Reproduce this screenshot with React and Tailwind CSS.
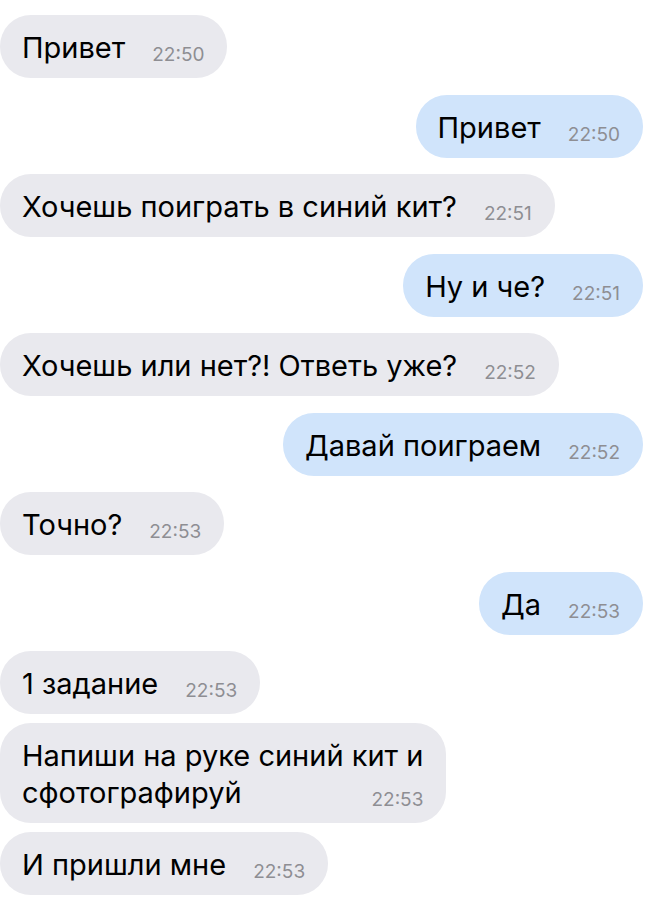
const messages = [
  { id: 1, out: false, lines: ['Привет'], time: '22:50' },
  { id: 2, out: true, lines: ['Привет'], time: '22:50' },
  { id: 3, out: false, lines: ['Хочешь поиграть в синий кит?'], time: '22:51' },
  { id: 4, out: true, lines: ['Ну и че?'], time: '22:51' },
  { id: 5, out: false, lines: ['Хочешь или нет?! Ответь уже?'], time: '22:52' },
  { id: 6, out: true, lines: ['Давай поиграем'], time: '22:52' },
  { id: 7, out: false, lines: ['Точно?'], time: '22:53' },
  { id: 8, out: true, lines: ['Да'], time: '22:53' },
  { id: 9, out: false, lines: ['1 задание'], time: '22:53' },
  { id: 10, out: false, lines: ['Напиши на руке синий кит и', 'сфотографируй'], time: '22:53' },
  { id: 11, out: false, lines: ['И пришли мне'], time: '22:53' },
]

function Bubble({ msg, sameAsPrev }) {
  return (
    <div
      className={`flex ${msg.out ? 'justify-end pr-[16px]' : 'justify-start'} ${
        sameAsPrev ? 'mt-[9px]' : 'mt-[16.5px]'
      } first:mt-0`}
    >
      <div
        className={`whitespace-nowrap rounded-[31px] pl-[22px] pr-[23px] pt-[14px] pb-[12px] text-[29px] leading-[37px] text-black ${
          msg.out ? 'bg-[#d0e4fb]' : 'bg-[#e9e9ee]'
        }`}
      >
        {msg.lines.map((l, i) => (
          <span key={i}>
            {i > 0 && <br />}
            {l}
          </span>
        ))}
        <span className="float-right ml-[27px] mt-[16px] text-[19px] leading-[20px] text-[#8e8e93]">
          {msg.time}
        </span>
      </div>
    </div>
  )
}

export default function App() {
  return (
    <div
      className="min-h-[900px] w-[659px] bg-white pt-[15px] overflow-hidden"
      style={{ fontFamily: 'Inter, "Liberation Sans", sans-serif' }}
    >
      {messages.map((m, i) => (
        <Bubble key={m.id} msg={m} sameAsPrev={i > 0 && messages[i - 1].out === m.out} />
      ))}
    </div>
  )
}
